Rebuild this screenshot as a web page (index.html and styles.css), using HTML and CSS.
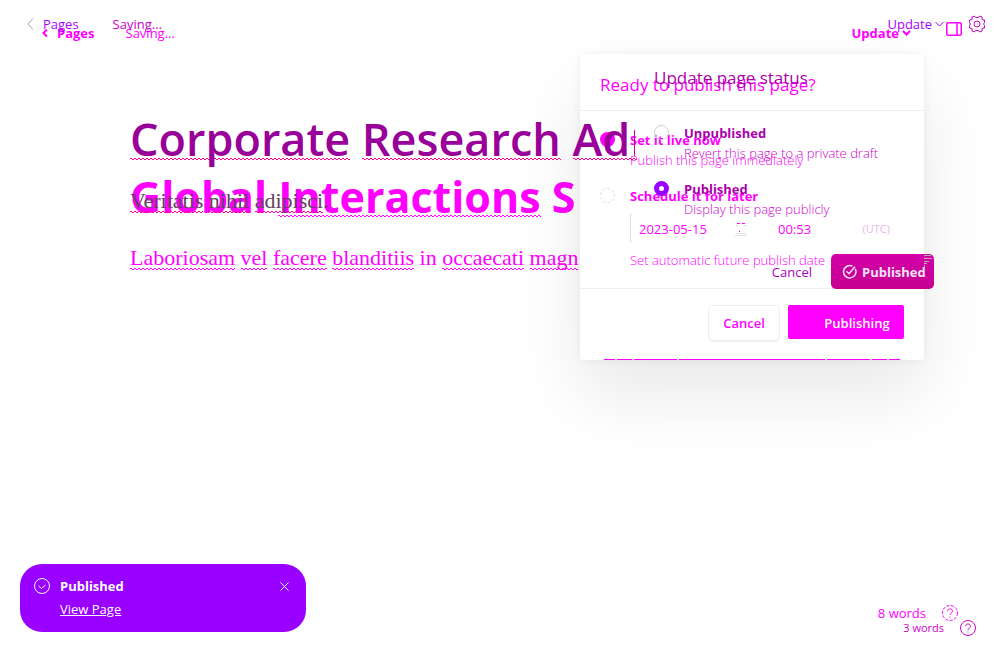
FILE: index.html
```html
<!DOCTYPE html>
<html lang="en">
<head>
<meta charset="utf-8">
<title>Page editor</title>
<link rel="stylesheet" href="styles.css">
</head>
<body>
<main class="stage">
  <section class="layer layer-next">
    <header class="bar bar-next">
      <a class="back" href="#"><svg class="chev" width="6" height="10" viewBox="0 0 6 10"><path d="M5 1.500 1.500 5 5 8.500"/></svg>Pages</a>
      <span class="saving">Saving...</span>
      <button class="update" type="button">Update<svg width="9" height="6" viewBox="0 0 9 6"><path d="M1 1 4.500 4.500 8 1"/></svg></button>
      <button class="icon-button" type="button" aria-label="Toggle sidebar"><svg width="16" height="14" viewBox="0 0 16 14"><path d="M2 .75h12q1.250 0 1.250 1.250v10q0 1.250-1.250 1.250H2Q.75 13.250.75 12V2Q.75.75 2 .75zM11 .75v12.500"/></svg></button>
    </header>
    <article class="copy copy-next">
      <h1 class="title">Global <span class="wave">Interactions</span> S</h1>
      <p class="lede"><span class="wave">Laboriosam</span> <span class="wave">vel</span> <span class="wave">facere</span> <span class="wave">blanditiis</span> in <span class="wave">occaecati</span> <span class="wave">magn</span></p>
    </article>
  </section>

  <form class="panel">
    <h2 class="panel-title">Ready to publish this page?</h2>
    <div class="panel-body">
      <div class="option">
        <input class="radio radio-live" type="radio" name="when" id="live" checked>
        <div><label for="live">Set it live now</label><p>Publish this page immediately</p></div>
      </div>
      <div class="option">
        <input class="radio radio-faint" type="radio" name="when" id="later">
        <div class="schedule">
          <label for="later">Schedule it for later</label>
          <div class="fields">
            <div class="field"><input type="text" value="2023-05-15" aria-label="Date"><svg width="12" height="13" viewBox="0 0 12 13"><path class="hot" d="M2 .5h3M7 .5h3M4 8.500h1"/><path d="M1 2.500h2M9 2.500h2M1 10.500h10M0 12.500h12"/></svg></div>
            <div class="field field-time"><input type="text" value="00:53" aria-label="Time"><span class="zone">(UTC)</span></div>
          </div>
          <p>Set automatic future publish date</p>
        </div>
      </div>
    </div>
    <footer class="panel-foot">
      <button class="cancel" type="button">Cancel</button>
      <button class="publishing" type="button">Publishing</button>
    </footer>
  </form>

  <section class="layer layer-prev">
    <header class="bar bar-prev">
      <a class="back" href="#"><svg class="chev" width="7" height="12" viewBox="0 0 7 12"><path d="M6 .5 1 6l5 5.500"/></svg>Pages</a>
      <span class="saving">Saving...</span>
      <button class="update" type="button">Update<svg width="9" height="6" viewBox="0 0 9 6"><path d="M.5 1 4.500 5 8.500 1"/></svg></button>
      <button class="icon-button" type="button" aria-label="Settings"><svg width="18" height="18" viewBox="0 0 18 18"><circle cx="9" cy="9" r="3"/><path d="M6.500 1 7.500 2.500h3L11.500 1 14 2v2.500L16.500 5v2.500L15.500 9l1 1.500V13l-2.500.5V16l-2.500 1-1-1.500h-3L6.500 17 4 16v-2.500L1.500 13v-2.500L2.500 9l-1-1.500V5L4 4.500V2z"/></svg></button>
    </header>
    <article class="copy copy-prev">
      <h1 class="title"><span class="wave">Corporate</span> <span class="wave">Research</span> <span class="wave wave-typing">Ad<i class="caret"></i></span></h1>
      <p class="lede"><span class="wave">Veritatis</span> <span class="wave">nihil</span> <span class="wave">adipisci</span>.</p>
    </article>
  </section>

  <form class="modal">
    <h2 class="modal-title">Update page status</h2>
    <div class="option">
      <input class="radio radio-off" type="radio" name="status" id="unpublished">
      <div><label for="unpublished">Unpublished</label><p>Revert this page to a private draft</p></div>
    </div>
    <div class="option">
      <input class="radio radio-on" type="radio" name="status" id="published" checked>
      <div><label for="published">Published</label><p>Display this page publicly</p></div>
    </div>
    <footer class="modal-foot">
      <button class="modal-cancel" type="button">Cancel</button>
      <button class="published" type="button"><svg width="15" height="15" viewBox="0 0 15 15"><path d="M13.300 5A6.200 6.200 0 1 1 10.500 2.200M4.500 7.200l2.500 2.500 6-7"/></svg>Published<svg class="streaks" width="10" height="17" viewBox="0 0 10 17"><path d="M0 1.500h7M0 4.500h8M0 7.500h5M0 9.500h3M.5 11v6" /></svg></button>
    </footer>
  </form>

  <aside class="toast">
    <svg width="16" height="16" viewBox="0 0 16 16"><circle cx="8" cy="8" r="7.500"/><path d="M4.500 8 7.500 10.500 11.500 7"/></svg>
    <div class="toast-text"><strong>Published</strong><a href="#">View Page</a></div>
    <button class="close" type="button" aria-label="Close"><svg width="9" height="9" viewBox="0 0 9 9"><path d="m.5.5 8 8m0-8-8 8"/></svg></button>
  </aside>

  <div class="count count-next"><span>8 words</span><svg width="16" height="16" viewBox="0 0 16 16"><circle cx="8" cy="8" r="7.500" stroke-dasharray="3 1.500"/><path d="M5.500 6.200c0-3 5-3 5 0 0 2-2.500 1.800-2.500 3.800M8 11.500v1"/></svg></div>
  <div class="count count-prev"><span>3 words</span><svg width="16" height="16" viewBox="0 0 16 16"><circle cx="8" cy="8" r="7.500"/><path d="M5.500 6.200c0-3 5-3 5 0 0 2-2.500 1.800-2.500 3.800M8 11.500v1"/></svg></div>
</main>
</body>
</html>
```
FILE: styles.css
```css
* { box-sizing: border-box; }
body { margin: 0; background: #fff; font: 13px/20px "Open Sans", sans-serif; color: #f0f; }
h1, h2, p { margin: 0; }
button { border: 0; padding: 0; background: none; font: inherit; color: inherit; }
a { color: inherit; text-decoration: none; }
svg { flex: none; fill: none; stroke: currentColor; }
form { margin: 0; }

.stage { position: relative; display: grid; min-height: 100vh; overflow: hidden; }
.layer { grid-area: 1 / 1; display: flex; flex-direction: column; min-width: 0; }
.layer-prev { z-index: 2; }

.bar { display: flex; align-items: center; height: 48px; }
.back { display: flex; align-items: center; }
.update { display: flex; align-items: center; margin-left: auto; }
.icon-button { display: flex; }

.bar-prev { padding: 0 14px 0 27px; color: #90c; }
.bar-prev .back { gap: 9px; color: #a0f; }
.bar-prev .chev { color: #b9b; }
.bar-prev .saving { margin-left: 34px; color: #c0c; }
.bar-prev .update { gap: 3px; color: #a0f; }
.bar-prev .icon-button { margin-left: 24px; color: #c0c; }

.bar-next { padding: 8px 38px 0 42px; height: 58px; }
.bar-next .back { gap: 9px; font-weight: 700; }
.bar-next .chev, .bar-next .update svg { stroke-width: 2; }
.bar-next .saving { margin-left: 31px; }
.bar-next .update { gap: 3px; font-weight: 700; }
.bar-next .icon-button { margin: -8px 0 0 35px; }
.bar-next .icon-button svg { stroke-width: 1.5; }

.copy { padding-left: 130px; white-space: nowrap; }
.title { font-size: 45px; line-height: 60px; font-weight: 600; }
.lede { font: 22px/32px "Liberation Serif", serif; }
.wave {
  --wave: #f0f;
  background-image: linear-gradient(90deg, var(--wave) 50%, transparent 50%), linear-gradient(90deg, transparent 50%, var(--wave) 50%);
  background-repeat: repeat-x;
  background-size: 4px 1px;
  background-position: 0 calc(100% - 1px), 0 100%;
}
.title .wave { background-position: 0 calc(100% - 10px), 0 calc(100% - 9px); }
.copy-prev .wave { --wave: #f09; }
.copy-prev { padding-top: 61px; color: #909; }
.copy-prev .lede { padding-top: 16px; color: #624262; }
.wave-typing { padding-right: 2px; }
.caret { display: inline-block; width: 1px; height: 26px; margin-left: 4px; background: #c09; }
.copy-next { padding-top: 109px; }
.copy-next .title { font-size: 43px; font-weight: 700; }
.copy-next .lede { padding-top: 15px; }

.panel {
  position: absolute; z-index: 1; top: 54px; right: 76px; width: 344px;
  background: #fff; border-radius: 4px;
  box-shadow: 0 0 8px rgba(0, 0, 0, .06), 0 35px 70px rgba(0, 0, 0, .09);
}
.panel::after {
  content: ""; position: absolute; left: 24px; right: 24px; bottom: 0; height: 1px;
  background: linear-gradient(90deg, #f0f 11px, #fff 11px 13px, #f0f 13px 28px, #fff 28px 30px, #f0f 30px 73px, #fff 73px 75px, #f0f 75px 221px, #fff 221px 223px, #f0f 223px 266px, #fff 266px 268px, #f0f 268px 283px, #fff 283px 285px, #f0f 285px);
}
.panel-title, .modal-title { font-size: 17px; font-weight: 400; line-height: 24px; }
.panel-title { padding: 19px 20px 13px; border-bottom: 1px solid #eee; }
.panel-body { display: grid; gap: 16px; padding: 19px 20px 18px; }
.option { display: flex; gap: 15px; }
.option label { display: block; font-weight: 700; }
.option p { font-weight: 300; }
.option > div { flex: 1; min-width: 0; }
.radio { flex: none; appearance: none; width: 15px; height: 15px; margin: 2px 0 0; border-radius: 50%; }
.radio-live { border: 5px solid #f0f; background: #525; }
.radio-faint { border: 1px dashed #ddd; }
.radio-off { border: 1px solid #ccc; }
.radio-on { border: 5px solid #90f; background: #fff; }
.fields { display: grid; grid-template-columns: 127fr 135fr; gap: 12px; padding: 6px 0; }
.field { display: flex; align-items: center; justify-content: space-between; height: 32px; padding: 2px 9px 0 8px; border: 1px solid transparent; border-left-color: #ddd; border-radius: 4px; color: #ddd; }
.field .hot { stroke: #f0f; }
.field input { width: 90px; min-width: 0; border: 0; padding: 0; background: none; font: inherit; color: #f0f; }
.field-time { border-left-color: transparent; }
.field-time input { width: 60px; }
.zone { font-size: 11px; padding-right: 4px; color: #e8b8e8; }
.panel-foot { display: flex; justify-content: flex-end; gap: 8px; padding: 16px 20px 19px; border-top: 1px solid #eee; }
.cancel { width: 72px; height: 36px; border: 1px solid #eee; border-radius: 5px; box-shadow: 0 1px 1px #eee; font-weight: 600; }
.publishing { width: 116px; height: 34px; padding: 2px 0 0 22px; border-radius: 2px; background: #f0f; color: #fff; font-weight: 600; }

.modal { position: absolute; z-index: 3; top: 66px; right: 66px; width: 280px; color: #a0a; }
.modal .option { padding-top: 33px; }
.modal .option + .option { padding-top: 16px; }
.modal .option p { color: #c0c; }
.modal-foot { display: flex; align-items: center; justify-content: flex-end; gap: 19px; padding-top: 35px; }
.modal-cancel { color: #a0b; }
.published { position: relative; display: flex; align-items: center; gap: 5px; width: 103px; height: 35px; padding-left: 11px; border-radius: 5px; background: linear-gradient(#d400aa, #c40090); color: #f4e4f4; font-weight: 700; }
.published svg { stroke-width: 1.5; }
.published .streaks { position: absolute; top: 0; right: 0; color: #baa; stroke-width: 1; }

.toast { position: absolute; z-index: 4; left: 20px; bottom: 28px; display: flex; align-items: flex-start; gap: 10px; width: 286px; padding: 12px 17px 12px 14px; border-radius: 22px; background: #90f; color: #fff; }
.toast > svg { margin-top: 2px; }
.toast-text { display: grid; gap: 2px; line-height: 21px; }
.toast-text a { text-decoration: underline; }
.close { margin: 6px 0 0 auto; display: flex; }

.count { position: absolute; z-index: 4; display: flex; align-items: center; }
.count-next { right: 42px; bottom: 37px; gap: 16px; }
.count-prev { right: 24px; bottom: 22px; gap: 16px; font-size: 11px; color: #c0c; }
```
